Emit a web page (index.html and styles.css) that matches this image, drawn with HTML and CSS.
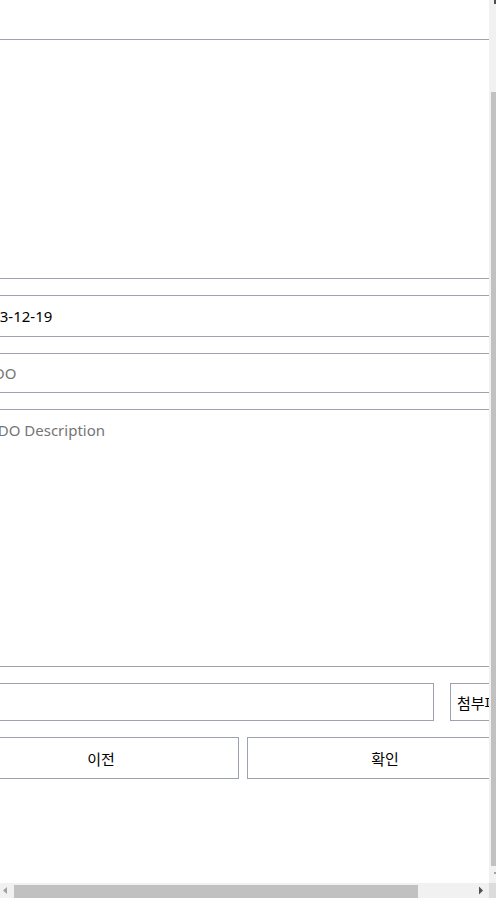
FILE: index.html
```html
<!DOCTYPE html>
<html lang="ko">
<head>
<meta charset="utf-8">
<title>TODO</title>
<link rel="stylesheet" href="styles.css">
</head>
<body>
<div class="window">
  <div class="viewport">
    <form class="form">
      <div class="preview"></div>
      <input class="field field-date" type="text" value="2023-12-19">
      <input class="field field-title" type="text" placeholder="TODO">
      <textarea class="field field-desc" placeholder="TODO Description"></textarea>
      <div class="file-row">
        <input class="field file-name" type="text" readonly>
        <button type="button" class="btn btn-attach">첨부파일</button>
      </div>
      <div class="actions">
        <button type="button" class="btn">이전</button>
        <button type="button" class="btn">확인</button>
      </div>
    </form>
  </div>
  <div class="vbar" aria-hidden="true">
    <span class="vbar-up"></span>
    <span class="vbar-thumb"></span>
    <span class="vbar-down"></span>
  </div>
  <div class="hbar" aria-hidden="true">
    <svg class="hbar-arrow" width="14" height="15" viewBox="0 0 14 15"><polygon points="3,7.5 7,4 7,11" fill="#a3a3a3"/></svg>
    <span class="hbar-thumb"></span>
    <span class="hbar-spacer"></span>
    <svg class="hbar-arrow" width="15" height="15" viewBox="0 0 15 15"><polygon points="9,7.5 5,3.5 5,11.5" fill="#505050"/></svg>
  </div>
  <div class="corner" aria-hidden="true"></div>
</div>
</body>
</html>
```
FILE: styles.css
```css
html, body {
  margin: 0;
  height: 100%;
  overflow: hidden;
  background: #fff;
}
.window {
  display: grid;
  grid-template-columns: 489px 7px;
  grid-template-rows: 883px 15px;
  width: 496px;
  height: 898px;
}
.viewport {
  overflow: hidden;
  background: #fff;
}
.form {
  display: flex;
  flex-direction: column;
  gap: 16px;
  width: 560px;
  margin: 0 0 0 -37px;
  padding: 39px 0 0 0;
  font-family: "Noto Sans", "Noto Sans CJK KR", sans-serif;
}
.preview {
  height: 240px;
  box-sizing: border-box;
  border: 1px solid #9ca3af;
}
.field {
  box-sizing: border-box;
  margin: 0;
  border: 1px solid #9ca3af;
  border-radius: 0;
  padding: 0 10px;
  font: 15px "Noto Sans", "Noto Sans CJK KR", sans-serif;
  color: #000;
  background: #fff;
  outline: none;
}
.field::placeholder {
  color: #757575;
}
.field-date {
  height: 42px;
}
.field-title {
  height: 40px;
}
.field-desc {
  height: 258px;
  padding: 10px 14px;
  resize: none;
  display: block;
}
.file-row {
  display: flex;
  gap: 16px;
  height: 38px;
}
.file-name {
  flex: 1;
  min-width: 0;
  height: 38px;
}
.btn {
  box-sizing: border-box;
  margin: 0;
  border: 1px solid #9ca3af;
  border-radius: 0;
  background: #fff;
  color: #000;
  font: 15px "Noto Sans CJK KR", "Noto Sans", sans-serif;
  padding: 0 6px;
  cursor: pointer;
}
.btn-attach {
  width: 73px;
  height: 38px;
  white-space: nowrap;
  text-align: left;
}
.actions {
  display: grid;
  grid-template-columns: 1fr 1fr;
  gap: 8px;
}
.actions .btn {
  height: 42px;
}

/* scrollbars */
.vbar {
  background: #f1f1f1;
  display: flex;
  flex-direction: column;
}
.vbar-up {
  height: 4px;
  width: 2px;
  margin-left: 5px;
  background: #505050;
  flex: none;
}
.vbar-thumb {
  margin: 88px 0 0 2px;
  height: 774px;
  background: #c1c1c1;
  flex: none;
}
.vbar-down {
  margin: 6px 0 0 5px;
  width: 2px;
  height: 2px;
  background: #a3a3a3;
  flex: none;
}
.hbar {
  background: #f1f1f1;
  display: flex;
  align-items: stretch;
}
.hbar-arrow {
  flex: none;
  display: block;
}
.hbar-thumb {
  width: 404px;
  margin-top: 2px;
  background: #c1c1c1;
  flex: none;
}
.hbar-spacer {
  flex: 1;
}
.corner {
  background: #dcdcdc;
}
```
